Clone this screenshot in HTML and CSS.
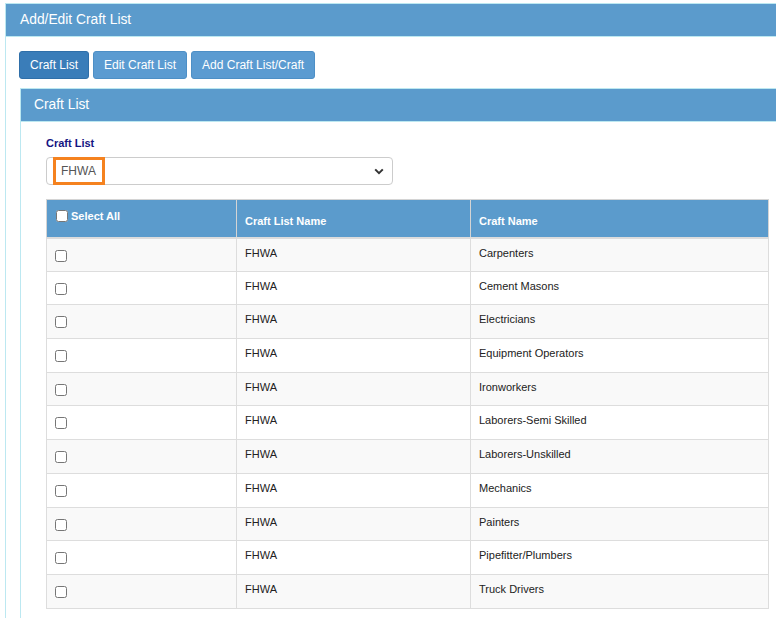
FILE: index.html
```html
<!DOCTYPE html>
<html>
<head>
<meta charset="utf-8">
<title>Add/Edit Craft List</title>
<link rel="stylesheet" href="styles.css">
</head>
<body>
<div class="panel outer">
  <div class="panel-heading">Add/Edit Craft List</div>
  <div class="panel-body">
    <div class="btn-row">
      <button class="btn active">Craft List</button>
      <button class="btn">Edit Craft List</button>
      <button class="btn">Add Craft List/Craft</button>
    </div>
    <div class="panel inner">
      <div class="panel-heading inner-heading">Craft List</div>
      <div class="inner-body">
        <label class="field-label">Craft List</label>
        <div class="select-wrap">
          <div class="select">
            <span class="select-value">FHWA</span>
            <svg class="chev" width="10" height="7" viewBox="0 0 10 7"><path d="M1.2 1.4 L5 5.2 L8.8 1.4" fill="none" stroke="#333" stroke-width="2"/></svg>
          </div>
          <div class="highlight"></div>
        </div>
        <table class="grid">
          <colgroup><col class="c1"><col class="c2"><col class="c3"></colgroup>
          <thead>
            <tr>
              <th class="th-select"><span class="select-all"><input type="checkbox"> Select All</span></th>
              <th>Craft List Name</th>
              <th>Craft Name</th>
            </tr>
          </thead>
          <tbody>
            <tr><td><input type="checkbox"></td><td>FHWA</td><td>Carpenters</td></tr>
            <tr><td><input type="checkbox"></td><td>FHWA</td><td>Cement Masons</td></tr>
            <tr><td><input type="checkbox"></td><td>FHWA</td><td>Electricians</td></tr>
            <tr><td><input type="checkbox"></td><td>FHWA</td><td>Equipment Operators</td></tr>
            <tr><td><input type="checkbox"></td><td>FHWA</td><td>Ironworkers</td></tr>
            <tr><td><input type="checkbox"></td><td>FHWA</td><td>Laborers-Semi Skilled</td></tr>
            <tr><td><input type="checkbox"></td><td>FHWA</td><td>Laborers-Unskilled</td></tr>
            <tr><td><input type="checkbox"></td><td>FHWA</td><td>Mechanics</td></tr>
            <tr><td><input type="checkbox"></td><td>FHWA</td><td>Painters</td></tr>
            <tr><td><input type="checkbox"></td><td>FHWA</td><td>Pipefitter/Plumbers</td></tr>
            <tr><td><input type="checkbox"></td><td>FHWA</td><td>Truck Drivers</td></tr>
          </tbody>
        </table>
      </div>
    </div>
  </div>
</div>
</body>
</html>
```

FILE: styles.css
```css
html, body {
  margin: 0;
  padding: 0;
  overflow: hidden;
  background: #fff;
  font-family: "Liberation Sans", Arial, sans-serif;
  color: #333;
}

body {
  width: 776px;
  height: 618px;
}

.panel {
  border: 1px solid #bce8f1;
  background: #fff;
}

.outer {
  margin: 3px 0 0 5px;
  width: 771px;
  height: 640px;
  border-right: none;
  box-sizing: border-box;
  overflow: hidden;
}

.panel-heading {
  background: #5b9bcc;
  color: #fff;
  height: 32px;
  line-height: 32px;
  font-size: 13.8px;
  padding-left: 14px;
  border-bottom: 1px solid #bce8f1;
}

.panel-body {
  padding: 14px 0 0 13px;
}

.btn-row {
  display: flex;
  gap: 4px;
}

.btn {
  font-family: "Liberation Sans", Arial, sans-serif;
  font-size: 12px;
  line-height: 16px;
  height: 28px;
  padding: 0 10px;
  color: #fff;
  background: #5b9bd1;
  border: 1px solid #4d8fc6;
  border-radius: 3px;
  margin: 0;
}

.btn.active {
  background: #3a7db9;
  border-color: #2f6fa9;
}

.inner {
  margin: 9px 0 0 1px;
  border-right: none;
  height: 600px;
}

.inner-heading {
  padding-left: 13px;
}

.inner-body {
  padding: 13px 0 0 25px;
}

.field-label {
  display: block;
  font-size: 11px;
  font-weight: bold;
  color: #141482;
  line-height: 16px;
  margin-bottom: 6px;
}

.select-wrap {
  position: relative;
  width: 347px;
}

.select {
  height: 28px;
  box-sizing: border-box;
  border: 1px solid #ccc;
  border-radius: 4px;
  display: flex;
  align-items: center;
  justify-content: space-between;
  padding: 0 8px 0 14px;
}

.select-value {
  font-size: 12px;
  color: #555;
}

.chev {
  display: block;
}

.highlight {
  position: absolute;
  left: 7px;
  top: 0;
  width: 52px;
  height: 28px;
  box-sizing: border-box;
  border: 3px solid #f5821f;
}

.grid {
  margin-top: 14px;
  border-collapse: collapse;
  width: 722px;
  table-layout: fixed;
  font-size: 11px;
}

.c1 { width: 190px; }
.c2 { width: 234px; }
.c3 { width: 298px; }

.grid th {
  background: #5b9bcc;
  color: #fff;
  font-weight: bold;
  text-align: left;
  vertical-align: bottom;
  height: 38px;
  box-sizing: border-box;
  padding: 0 8px 8px;
  line-height: 16px;
  border: 1px solid #d4d4d4;
  border-bottom: 2px solid #dcdcdc;
}

.grid th.th-select {
  vertical-align: top;
  padding-top: 8px;
}

.select-all {
  display: inline-flex;
  align-items: center;
}

.select-all input {
  margin: 0 3px 0 1px;
  width: 12px;
  height: 12px;
}

.grid td {
  border: 1px solid #ddd;
  padding: 6px 8px 0;
  height: 33.7px;
  box-sizing: border-box;
  vertical-align: top;
  line-height: 16px;
  color: #222;
}

.grid td input {
  margin: 5px 0 0;
  width: 12px;
  height: 12px;
}

.grid tbody tr:nth-child(odd) td {
  background: #f9f9f9;
}
```
